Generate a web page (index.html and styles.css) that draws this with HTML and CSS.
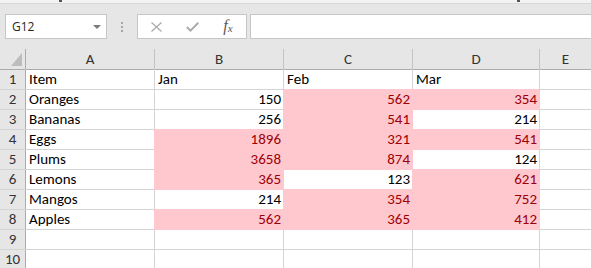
FILE: index.html
```html
<!DOCTYPE html>
<html lang="en">
<head>
  <meta charset="UTF-8">
  <meta name="viewport" content="width=device-width, initial-scale=1.0">
  <title>Book1 - Excel</title>
  <link rel="stylesheet" href="styles.css">
</head>
<body>
  <div class="ribbon-edge">
    <span class="frag frag-left"></span>
    <span class="frag frag-right"></span>
  </div>

  <div class="formula-bar">
    <div class="name-box">
      <span>G12</span>
      <svg class="caret" width="8" height="4" viewBox="0 0 8 4"><path d="M0 0 H8 L4 4 Z" fill="#7b7b7b"/></svg>
    </div>
    <div class="grip"><i></i><i></i><i></i></div>
    <div class="fx-buttons">
      <span class="fx-btn">
        <svg width="11" height="10" viewBox="0 0 11 10"><path d="M0.5 0.5 L10.5 9.5 M10.5 0.5 L0.5 9.5" stroke="#ababab" stroke-width="1.3" fill="none"/></svg>
      </span>
      <span class="fx-btn">
        <svg width="13" height="10" viewBox="0 0 13 10"><path d="M0.8 5 L4.5 8.6 L12.3 0.8" stroke="#ababab" stroke-width="2" fill="none"/></svg>
      </span>
      <span class="fx-btn"><span class="fx-label"><i>f</i><sub>x</sub></span></span>
    </div>
    <div class="formula-input"></div>
  </div>

  <div class="sheet">
    <div class="corner"><span class="corner-mark"></span></div>
    <div class="col-head">A</div>
    <div class="col-head">B</div>
    <div class="col-head">C</div>
    <div class="col-head">D</div>
    <div class="col-head">E</div>

    <div class="row-head">1</div>
    <div class="cell">Item</div>
    <div class="cell">Jan</div>
    <div class="cell">Feb</div>
    <div class="cell">Mar</div>
    <div class="cell"></div>

    <div class="row-head">2</div>
    <div class="cell">Oranges</div>
    <div class="cell num">150</div>
    <div class="cell num bad">562</div>
    <div class="cell num bad">354</div>
    <div class="cell"></div>

    <div class="row-head">3</div>
    <div class="cell">Bananas</div>
    <div class="cell num">256</div>
    <div class="cell num bad">541</div>
    <div class="cell num">214</div>
    <div class="cell"></div>

    <div class="row-head">4</div>
    <div class="cell">Eggs</div>
    <div class="cell num bad">1896</div>
    <div class="cell num bad">321</div>
    <div class="cell num bad">541</div>
    <div class="cell"></div>

    <div class="row-head">5</div>
    <div class="cell">Plums</div>
    <div class="cell num bad">3658</div>
    <div class="cell num bad">874</div>
    <div class="cell num">124</div>
    <div class="cell"></div>

    <div class="row-head">6</div>
    <div class="cell">Lemons</div>
    <div class="cell num bad">365</div>
    <div class="cell num">123</div>
    <div class="cell num bad">621</div>
    <div class="cell"></div>

    <div class="row-head">7</div>
    <div class="cell">Mangos</div>
    <div class="cell num">214</div>
    <div class="cell num bad">354</div>
    <div class="cell num bad">752</div>
    <div class="cell"></div>

    <div class="row-head">8</div>
    <div class="cell">Apples</div>
    <div class="cell num bad">562</div>
    <div class="cell num bad">365</div>
    <div class="cell num bad">412</div>
    <div class="cell"></div>

    <div class="row-head">9</div>
    <div class="cell"></div>
    <div class="cell"></div>
    <div class="cell"></div>
    <div class="cell"></div>
    <div class="cell"></div>

    <div class="row-head">10</div>
    <div class="cell"></div>
    <div class="cell"></div>
    <div class="cell"></div>
    <div class="cell"></div>
    <div class="cell"></div>
  </div>
</body>
</html>
```

FILE: styles.css
```css
body {
  margin: 0;
  width: 591px;
  height: 268px;
  overflow: hidden;
  background-color: #e6e6e6;
  font-family: Carlito, Lato, "Liberation Sans", sans-serif;
}

/* bottom edge of the ribbon, cut off by the crop */
.ribbon-edge {
  height: 3px;
  background-color: #f3f3f3;
  border-bottom: 1px solid #d9d9d9;
  display: flex;
}
.frag {
  width: 3px;
  height: 2px;
  background-color: #555;
}
.frag-left {
  margin-left: 59px;
}
.frag-right {
  margin-left: 455px;
}

.formula-bar {
  display: flex;
  align-items: center;
  height: 25px;
  padding: 10px 0 10px 5px;
}
.name-box,
.fx-buttons,
.formula-input {
  box-sizing: border-box;
  height: 25px;
  background-color: #fff;
  border: 1px solid #c6c6c6;
}
.name-box {
  width: 102px;
  display: flex;
  align-items: center;
  justify-content: space-between;
  padding: 0 5px 0 6px;
  font-family: "Open Sans", "Noto Sans", sans-serif;
  font-size: 12px;
  color: #262626;
}
.caret {
  margin-top: 1px;
}
.grip {
  width: 30px;
  display: flex;
  flex-direction: column;
  align-items: center;
  gap: 2px;
}
.grip i {
  width: 2px;
  height: 2px;
  background-color: #a6a6a6;
}
.fx-buttons {
  width: 110px;
  display: flex;
  align-items: center;
}
.fx-btn {
  width: 36px;
  display: flex;
  justify-content: center;
  align-items: center;
}
.fx-label {
  font-family: "Liberation Serif", serif;
  font-size: 16px;
  color: #5a5a5a;
  line-height: 16px;
  margin-top: -2px;
}
.fx-label sub {
  font-style: italic;
  font-size: 11px;
  line-height: 0;
  vertical-align: -1px;
}
.formula-input {
  flex: 1;
  margin-left: 3px;
  margin-right: -2px;
}

/* worksheet grid: the gaps are the gridlines */
.sheet {
  display: grid;
  grid-template-columns: 25px 128px 128px 128px 126px 1fr;
  grid-template-rows: 20px repeat(10, 19px);
  gap: 1px;
  background-color: #d4d4d4;
  font-size: 15px;
}
.corner,
.col-head,
.row-head {
  background-color: #e6e6e6;
  color: #333;
}
.corner {
  display: flex;
  justify-content: flex-end;
  align-items: flex-end;
  padding: 0 3px 3px 0;
  box-shadow: 1px 0 0 #ababab, 0 1px 0 #ababab;
}
.corner-mark {
  width: 0;
  height: 0;
  border-left: 11px solid transparent;
  border-bottom: 13px solid #bcbcbc;
}
.col-head {
  text-align: center;
  line-height: 20px;
  box-shadow: 1px 0 0 #c3c3c3, 0 1px 0 #ababab;
}
.row-head {
  text-align: center;
  line-height: 19px;
  box-shadow: 1px 0 0 #ababab;
}
.cell {
  background-color: #fff;
  color: #000;
  line-height: 19px;
  padding: 0 3px;
  white-space: nowrap;
  overflow: visible;
}
.num {
  text-align: right;
  padding-right: 2px;
}
/* "Light Red Fill with Dark Red Text" conditional format */
.bad {
  background-color: #ffc7ce;
  color: #9c0006;
  box-shadow: 0 0 0 1px #ffc7ce;
}
```
